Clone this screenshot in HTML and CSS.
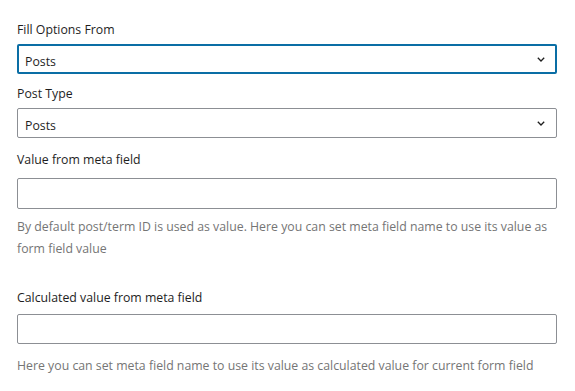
FILE: index.html
```html
<!DOCTYPE html>
<html lang="en">
<head>
<meta charset="utf-8">
<title>Field options</title>
<link rel="stylesheet" href="styles.css">
</head>
<body>
<div class="panel">
  <label class="label label-1">Fill Options From</label>
  <div class="select select-focus select-1">
    <span class="select-value">Posts</span>
    <svg class="chevron" width="8" height="5" viewBox="0 0 8 5"><polyline points="0.8,0.8 4,4 7.2,0.8" fill="none" stroke="#1e1e1e" stroke-width="1.3"/></svg>
  </div>

  <label class="label label-2">Post Type</label>
  <div class="select select-2">
    <span class="select-value">Posts</span>
    <svg class="chevron" width="8" height="5" viewBox="0 0 8 5"><polyline points="0.8,0.8 4,4 7.2,0.8" fill="none" stroke="#1e1e1e" stroke-width="1.3"/></svg>
  </div>

  <label class="label label-3">Value from meta field</label>
  <input class="text-input input-1" type="text">
  <p class="help help-1">By default post/term ID is used as value. Here you can set meta field name to use its value as form field value</p>

  <label class="label label-4">Calculated value from meta field</label>
  <input class="text-input input-2" type="text">
  <p class="help help-2">Here you can set meta field name to use its value as calculated value for current form field</p>
</div>
</body>
</html>
```
FILE: styles.css
```css
html, body {
  margin: 0;
  padding: 0;
  background: #ffffff;
}

body {
  font-family: "Open Sans", "Noto Sans", sans-serif;
  font-size: 12.3px;
  color: #1e1e1e;
}

.panel {
  width: 540px;
  padding: 19px 18px 0 17px;
  display: flex;
  flex-direction: column;
}

.label {
  display: block;
  line-height: 18px;
  padding-top: 2px;
  color: #1e1e1e;
}

.label-1 { margin-bottom: 5px; }
.label-2 { margin-top: 9px; margin-bottom: 5px; }
.label-3 { margin-top: 11px; margin-bottom: 9px; }
.label-4 { margin-top: 27px; margin-bottom: 7px; }

.select {
  box-sizing: border-box;
  height: 30px;
  display: flex;
  align-items: center;
  justify-content: space-between;
  border: 1px solid #8c8f94;
  border-radius: 2px;
  padding: 0 11px 0 7px;
  background: #fff;
}

.select-focus {
  border: 2px solid #0a6ea5;
  padding: 0 10px 0 6px;
}

.select-value {
  line-height: 18px;
  padding-top: 5px;
  color: #1e1e1e;
}

.chevron {
  display: block;
  margin-top: 1px;
}

.text-input {
  box-sizing: border-box;
  display: block;
  width: 100%;
  height: 30px;
  margin: 0;
  border: 1px solid #8c8f94;
  border-radius: 2px;
  background: #fff;
  font: inherit;
  padding: 0 8px;
  outline: none;
}

.input-1 { height: 31px; }

.help {
  margin: 0;
  line-height: 22px;
  color: #757575;
}

.help-1 { margin-top: 7px; }
.help-2 { margin-top: 11px; }
```
